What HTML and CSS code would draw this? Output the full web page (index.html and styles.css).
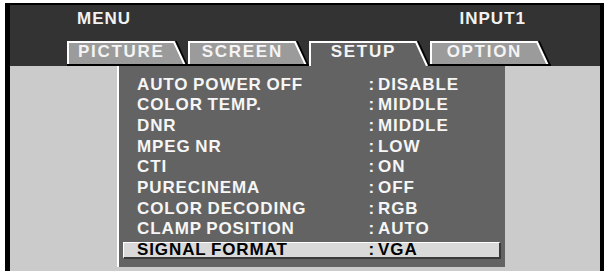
FILE: index.html
```html
<!DOCTYPE html>
<html>
<head>
<meta charset="utf-8">
<link rel="stylesheet" href="styles.css">
</head>
<body>
<div class="frame">
  <div class="head">
    <div class="titlebar"><span>MENU</span><span>INPUT1</span></div>
    <div class="tabs">
      <div class="tab">
        <svg class="tab-bg" viewBox="0 0 121 25" width="121" height="25">
          <polygon points="0,0 107,0 118,25 0,25" fill="#9b9b9b"/>
          <polyline points="1,24 1,1 107,1 117.5,23.5" fill="none" stroke="#fff" stroke-width="2"/>
          <line x1="109" y1="0" x2="120" y2="24" stroke="#000" stroke-width="1.5"/>
          <rect x="0" y="23" width="121" height="2" fill="#000"/>
        </svg>
        <span class="tab-label">PICTURE</span>
      </div>
      <div class="tab">
        <svg class="tab-bg" viewBox="0 0 121 25" width="121" height="25">
          <polygon points="0,0 107,0 118,25 0,25" fill="#9b9b9b"/>
          <polyline points="1,24 1,1 107,1 117.5,23.5" fill="none" stroke="#fff" stroke-width="2"/>
          <line x1="109" y1="0" x2="120" y2="24" stroke="#000" stroke-width="1.5"/>
          <rect x="0" y="23" width="121" height="2" fill="#000"/>
        </svg>
        <span class="tab-label">SCREEN</span>
      </div>
      <div class="tab">
        <svg class="tab-bg" viewBox="0 0 121 25" width="121" height="25">
          <polygon points="0,0 107,0 118,25 0,25" fill="#636363"/>
          <polyline points="1,25 1,1 107,1 118,25" fill="none" stroke="#fff" stroke-width="2"/>
          <line x1="109" y1="0" x2="120" y2="24" stroke="#000" stroke-width="1.5"/>
          <rect x="119" y="23" width="2" height="2" fill="#000"/>
        </svg>
        <span class="tab-label">SETUP</span>
      </div>
      <div class="tab">
        <svg class="tab-bg" viewBox="0 0 121 25" width="121" height="25">
          <polygon points="0,0 107,0 118,25 0,25" fill="#9b9b9b"/>
          <polyline points="1,24 1,1 107,1 117.5,23.5" fill="none" stroke="#fff" stroke-width="2"/>
          <line x1="109" y1="0" x2="120" y2="24" stroke="#000" stroke-width="1.5"/>
          <rect x="0" y="23" width="121" height="2" fill="#000"/>
        </svg>
        <span class="tab-label">OPTION</span>
      </div>
    </div>
  </div>
  <div class="body">
    <div class="side"></div>
    <div class="panel">
      <div class="row"><span class="label">AUTO POWER OFF</span><span class="value"><span class="colon">:</span>DISABLE</span></div>
      <div class="row"><span class="label">COLOR TEMP.</span><span class="value"><span class="colon">:</span>MIDDLE</span></div>
      <div class="row"><span class="label">DNR</span><span class="value"><span class="colon">:</span>MIDDLE</span></div>
      <div class="row"><span class="label">MPEG NR</span><span class="value"><span class="colon">:</span>LOW</span></div>
      <div class="row"><span class="label">CTI</span><span class="value"><span class="colon">:</span>ON</span></div>
      <div class="row"><span class="label">PURECINEMA</span><span class="value"><span class="colon">:</span>OFF</span></div>
      <div class="row"><span class="label">COLOR DECODING</span><span class="value"><span class="colon">:</span>RGB</span></div>
      <div class="row"><span class="label">CLAMP POSITION</span><span class="value"><span class="colon">:</span>AUTO</span></div>
      <div class="row sel"><span class="label">SIGNAL FORMAT</span><span class="value"><span class="colon">:</span>VGA</span></div>
    </div>
  </div>
</div>
</body>
</html>
```

FILE: styles.css
```css
* {
  box-sizing: border-box;
  margin: 0;
  padding: 0;
}

html, body {
  background: #fff;
  overflow: hidden;
}

body {
  font-family: "Liberation Sans", Arial, sans-serif;
  font-weight: bold;
  font-size: 17px;
}

.frame {
  margin: 3px 0 0 5px;
  width: 599px;
  height: 290px;
  border-style: solid;
  border-color: #000;
  border-width: 2px 4px 0 5px;
  background: #cbcbcb;
  display: flex;
  flex-direction: column;
}

.head {
  background: #333;
  padding-top: 4px;
}

.titlebar {
  display: flex;
  justify-content: space-between;
  padding: 0 74px 0 67px;
  color: #f2f2f2;
  line-height: 20px;
  letter-spacing: 1px;
}

.tabs {
  display: flex;
  margin: 12px 0 0 57px;
  height: 25px;
}

.tab {
  position: relative;
  width: 121px;
  height: 25px;
}

.tab-bg {
  position: absolute;
  left: 0;
  top: 0;
  display: block;
}

.tab-label {
  position: relative;
  display: block;
  width: 107px;
  margin-top: 1px;
  padding-left: 1.7px;
  text-align: center;
  line-height: 20px;
  letter-spacing: 1.7px;
  color: #f4f4f4;
}

.body {
  flex: 1;
  display: flex;
  align-items: flex-start;
}

.side {
  width: 107px;
}

.panel {
  width: 388px;
  border-left: 2px solid #fff;
  background: #636363;
  padding: 8.5px 0 7.5px 0;
}

.row {
  display: flex;
  padding-left: 18px;
  height: 20.7px;
  line-height: 20.7px;
  color: #f6f6f6;
  letter-spacing: 0.9px;
  word-spacing: -1px;
  white-space: nowrap;
}

.label {
  width: 231.5px;
}

.colon {
  margin-right: 3px;
}

.row.sel {
  margin: 2px 4px 0 4px;
  height: 17px;
  line-height: 14px;
  padding-left: 13px;
  background: #d9d9d9;
  border-top: 1px solid #fff;
  border-left: 1px solid #fff;
  border-right: 2px solid #3a3a3a;
  border-bottom: 2px solid #3a3a3a;
  color: #000;
}
```
